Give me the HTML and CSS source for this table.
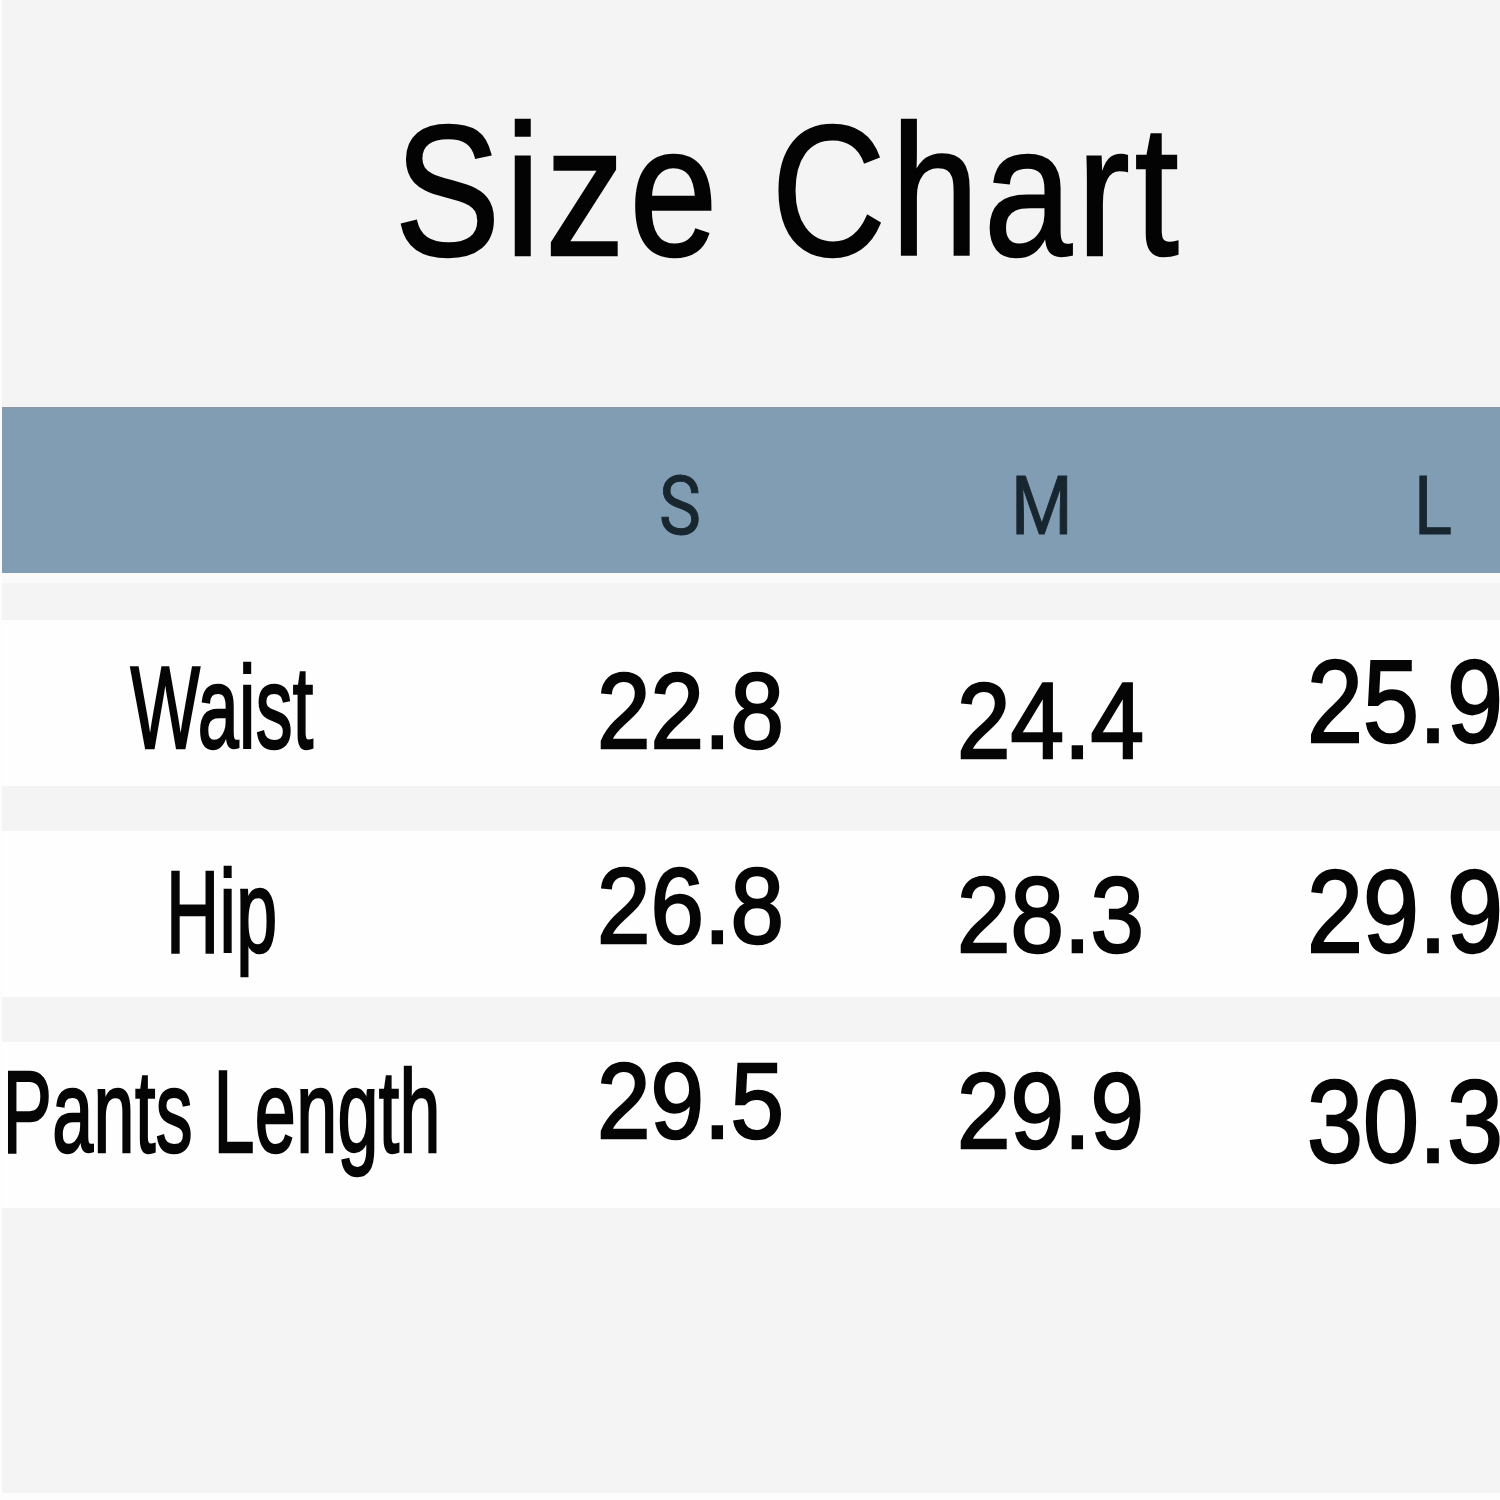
FILE: index.html
```html
<!DOCTYPE html>
<html lang="en">
<head>
<meta charset="utf-8">
<title>Size Chart</title>
<link rel="stylesheet" href="styles.css">
</head>
<body>
<main class="sheet">
  <header class="title-area">
    <h1 class="title"><span class="title-text">Size Chart</span></h1>
  </header>
  <section class="chart">
    <div class="head">
      <div class="cell label-cell"></div>
      <div class="cell"><span class="size size-s">S</span></div>
      <div class="cell"><span class="size size-m">M</span></div>
      <div class="cell"><span class="size size-l">L</span></div>
    </div>
    <div class="strip"></div>
    <div class="rows">
      <div class="row">
        <div class="cell label-cell"><span class="label dy-30">Waist</span></div>
        <div class="cell"><span class="num dy-37">22.8</span></div>
        <div class="cell"><span class="num dy-47">24.4</span></div>
        <div class="cell"><span class="num big dy-23">25.9</span></div>
      </div>
      <div class="row">
        <div class="cell label-cell"><span class="label dy-23">Hip</span></div>
        <div class="cell"><span class="num dy-21">26.8</span></div>
        <div class="cell"><span class="num dy-30">28.3</span></div>
        <div class="cell"><span class="num big dy-22">29.9</span></div>
      </div>
      <div class="row">
        <div class="cell label-cell"><span class="label dy-12">Pants Length</span></div>
        <div class="cell"><span class="num dy-5">29.5</span></div>
        <div class="cell"><span class="num dy-15">29.9</span></div>
        <div class="cell"><span class="num big dy-21">30.3</span></div>
      </div>
    </div>
  </section>
</main>
</body>
</html>
```
FILE: styles.css
```css
* { box-sizing: border-box; }

html, body {
  margin: 0;
  padding: 0;
  background: #fdfdfd;
}

body {
  font-family: "Liberation Sans", Arial, sans-serif;
  color: #050505;
  overflow: hidden;
}

.sheet {
  width: 1500px;
  height: 1493px;
  background: #f4f4f4;
  margin-left: 2px;
  overflow: hidden;
}

.title-area {
  height: 407px;
  padding-top: 98px;
  padding-left: 74px;
}

.title {
  margin: 0;
  display: flex;
  justify-content: center;
  font-weight: normal;
}

.title-text {
  display: block;
  font-size: 186px;
  line-height: 1;
  letter-spacing: 6px;
  white-space: nowrap;
  transform: scaleX(0.85);
  transform-origin: center;
  color: #030303;
  -webkit-text-stroke: 2.5px #030303;
}

.chart {
  display: flex;
  flex-direction: column;
}

.head,
.row {
  display: grid;
  grid-template-columns: 594px 360px 350px 196px;
  align-items: start;
}

.head {
  height: 166px;
  background: #819db3;
  border-top: 2px solid #8a98a8;
}

.cell {
  display: flex;
  justify-content: flex-start;
  align-items: flex-start;
  min-width: 0;
}

.label-cell {
  justify-content: center;
  padding-right: 154px;
}

.size {
  display: block;
  font-family: Roboto, "Liberation Sans", sans-serif;
  font-size: 82px;
  line-height: 1;
  color: #17262f;
  margin-top: 56px;
  transform: scaleX(0.86);
  transform-origin: left;
  -webkit-text-stroke: 1px #17262f;
}

.size-s { margin-left: 63px; }
.size-m { margin-left: 55px; }
.size-l { margin-left: 108px; }

.strip {
  height: 10px;
  background: #fafafa;
}

.rows {
  display: flex;
  flex-direction: column;
  gap: 45px;
  margin-top: 37px;
}

.row {
  height: 166px;
  background: #fefefe;
}

.label {
  display: block;
  flex-shrink: 0;
  white-space: nowrap;
  font-size: 116px;
  line-height: 1;
  letter-spacing: 0.5px;
  transform: scaleX(0.635);
  transform-origin: center;
  -webkit-text-stroke: 2.5px #050505;
}

.num {
  display: block;
  white-space: nowrap;
  font-size: 108px;
  line-height: 1;
  margin-left: 1px;
  transform: scaleX(0.89);
  transform-origin: left;
  -webkit-text-stroke: 2.5px #050505;
}

.num.big {
  font-size: 117px;
  transform: scaleX(0.86);
}

.dy-5 { margin-top: 5px; }
.dy-12 { margin-top: 12px; }
.dy-15 { margin-top: 15px; }
.dy-21 { margin-top: 21px; }
.dy-22 { margin-top: 22px; }
.dy-23 { margin-top: 23px; }
.dy-30 { margin-top: 30px; }
.dy-37 { margin-top: 37px; }
.dy-47 { margin-top: 47px; }
```
